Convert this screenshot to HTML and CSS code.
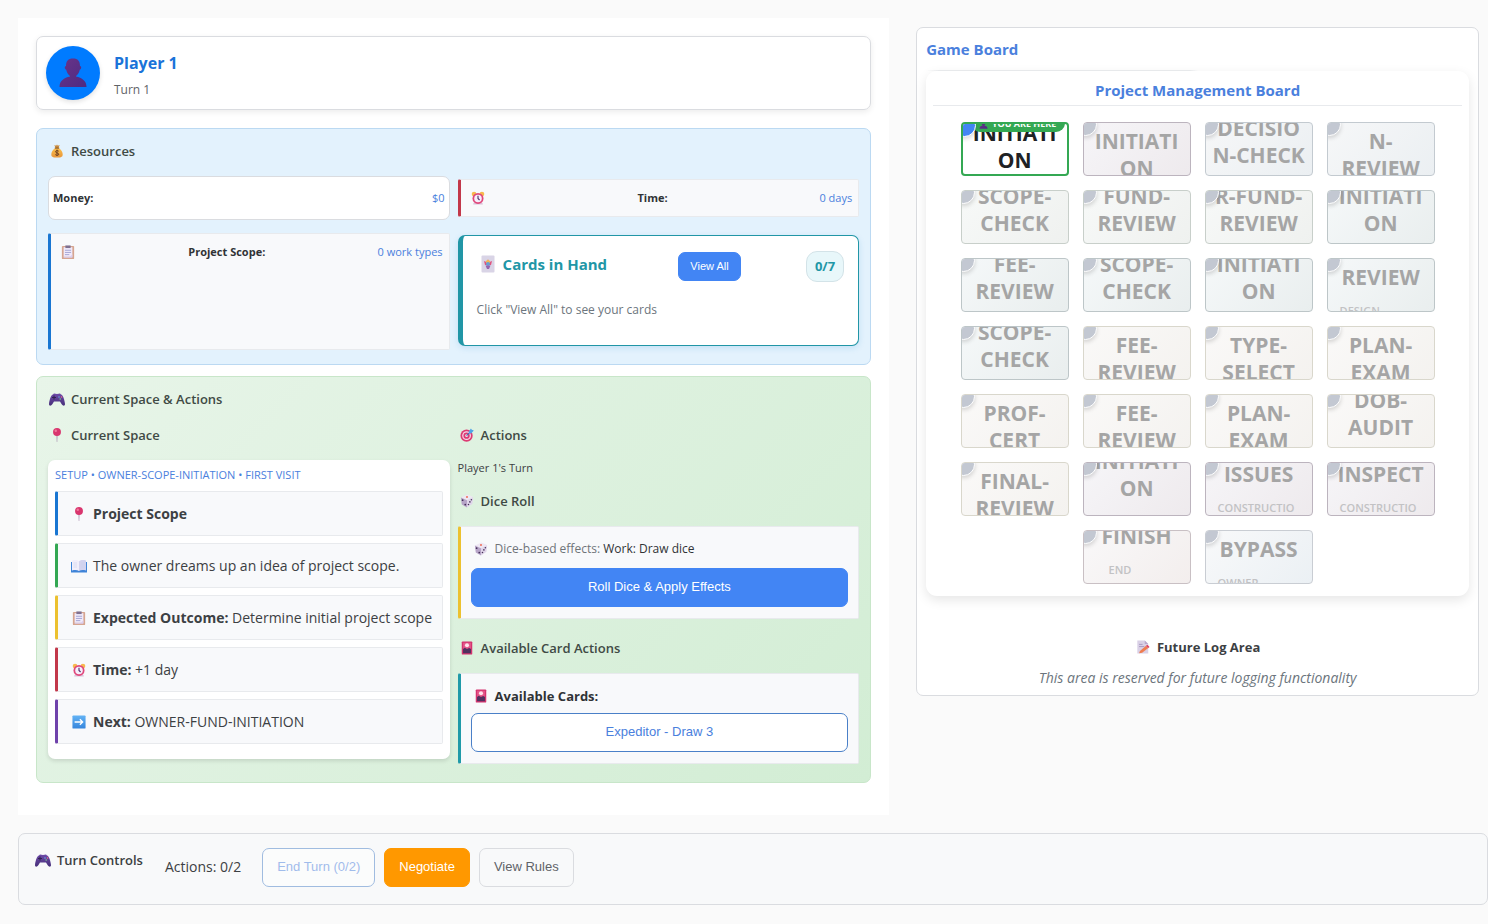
FILE: index.html
```html
<!DOCTYPE html>
<html lang="en">
<head>
<meta charset="utf-8">
<title>Project Management Game</title>
<link rel="stylesheet" href="styles.css">
</head>
<body>
<svg class="defs" aria-hidden="true">
  <defs>
    <linearGradient id="g-purple" x1="0" y1="0" x2="0" y2="1"><stop offset="0" stop-color="#6d4aa8"/><stop offset="1" stop-color="#47307a"/></linearGradient>
    <linearGradient id="g-person" x1="0" y1="0" x2="1" y2="1"><stop offset="0" stop-color="#6a3488"/><stop offset="1" stop-color="#4c2a83"/></linearGradient>
    <linearGradient id="g-gold" x1="0" y1="0" x2="0" y2="1"><stop offset="0" stop-color="#fcc04c"/><stop offset="1" stop-color="#e8963a"/></linearGradient>
    <linearGradient id="g-blue" x1="0" y1="0" x2="0" y2="1"><stop offset="0" stop-color="#63b3f5"/><stop offset="1" stop-color="#3585dc"/></linearGradient>
  </defs>
  <symbol id="i-person" viewBox="0 0 28 30"><path fill="url(#g-person)" d="M7 8c0-5 2-7.500 7-7.500s7 2.500 7 7.500l1 .5c.6 1-.2 3-1.200 3.300C20 15 18.500 17 17 18v.5c6 1.500 10.500 4 10.500 10.500H.5C.5 22.500 5 20 11 18.500V18c-1.500-1-3-3-3.800-6.200C6 11.500 5.400 9.500 6 8.500z"/></symbol>
  <symbol id="i-money" viewBox="0 0 16 16"><path fill="#c98b3c" d="M5 1l2 1 1-1.500L9 2l2-1-1.500 4h-3z"/><path fill="url(#g-gold)" d="M6 4.500h4c3 2 4.500 4.500 4.500 7.500 0 2.500-1.500 3.500-6.500 3.500S1.500 14.500 1.500 12c0-3 1.500-5.500 4.500-7.500z"/><path fill="#8a5a2b" d="M5.500 4h5v1.300h-5z"/><path d="M10 8.300C9 7 6.200 7.400 6.300 8.900c.1 1.700 3.600 1 3.700 2.700.1 1.700-3 1.900-4 .4M8 6.500v7" fill="none" stroke="#6b3f22" stroke-width="1.100"/></symbol>
  <symbol id="i-clock" viewBox="0 0 16 16"><circle cx="3.500" cy="3.500" r="2.700" fill="#f8b84e"/><circle cx="12.500" cy="3.500" r="2.700" fill="#f8b84e"/><path fill="#d9c3da" d="M3 13.500h10l.5 2h-11z"/><circle cx="8" cy="8.500" r="6.300" fill="#e0487c"/><circle cx="8" cy="8.500" r="4.300" fill="#f6eefb"/><path d="M8 5.500v3l1.800 1.800" fill="none" stroke="#51336f" stroke-width="1.300"/></symbol>
  <symbol id="i-clip" viewBox="0 0 16 16"><rect x="1" y="1" width="14" height="15" rx="1" fill="#d6a590"/><path fill="#f0eafa" d="M3 2.500h10v11H3z"/><path fill="#dccff0" d="M3 13.500h7l3-3v4H3z"/><path fill="#7f7090" d="M5 .5h6v3H5z"/><path stroke="#9b9ed0" d="M4.500 6h7M4.500 8.500h7M4.500 11h5"/></symbol>
  <symbol id="i-card" viewBox="0 0 14 18"><rect x=".5" y=".5" width="13" height="17" rx="1" fill="#d9d4e6"/><path fill="#e0557f" d="M3 6l2.500 1L7 4.500l1.500 2.500L11 6l-1 4H4z"/><path fill="#f3b556" d="M5 6l2-1.500L9 6v2H5z"/><circle cx="7" cy="9" r="2" fill="#64a0d8"/><path fill="#9764ae" d="M4.500 10.500h5L8 14H6z"/></symbol>
  <symbol id="i-pad" viewBox="0 0 16 14"><path fill="url(#g-purple)" d="M4 2.500C5 .8 6 2 8 2s3-1.200 4 .5c2 .5 3.500 5 4 9.500.1 2.300-2.200 2-3.300.2L11 9.500H5L3.300 12.200C2.200 14 0 14.300 0 12c.5-4.500 2-9 4-9.500z"/><path stroke="#312150" d="M3 5.500h4M5 3.500v4"/><circle cx="10" cy="5" r=".8" fill="#64a9e8"/><circle cx="12.500" cy="5" r=".8" fill="#f06c8c"/><circle cx="11.200" cy="7" r=".8" fill="#7cc98f"/></symbol>
  <symbol id="i-pin" viewBox="0 0 16 16"><path fill="#a993b0" d="M7.400 8h1.200l-.3 8h-.6z"/><circle cx="8" cy="4.600" r="4.500" fill="#d9366e"/><circle cx="6.600" cy="3.200" r="1.400" fill="#f0789b"/></symbol>
  <symbol id="i-book" viewBox="0 0 16 14"><path fill="#3f84d8" d="M0 3h16v10.500H0z"/><path fill="#f1eefb" d="M1 1.500c3-.8 5.500-.5 7 .8v9.700c-1.500-1-4-1.200-7-.5z"/><path fill="#d3d3ef" d="M15 1.500c-3-.8-5.500-.5-7 .8v9.700c1.500-1 4-1.200 7-.5z"/><path stroke="#c9d0ec" stroke-width=".6" d="M2.500 4H6M2.500 6H6M2.500 8H6M10 4h3.500M10 6h3.500M10 8h3.500"/></symbol>
  <symbol id="i-next" viewBox="0 0 16 16"><rect x=".5" y=".5" width="15" height="15" rx="1" fill="url(#g-blue)"/><path d="M3 8h9M9 4.800L12.200 8 9 11.200" fill="none" stroke="#fff" stroke-width="1.500"/></symbol>
  <symbol id="i-target" viewBox="0 0 16 16"><circle cx="7.500" cy="8.800" r="7" fill="#dc3b73"/><circle cx="7.500" cy="8.800" r="5" fill="#f6dce9"/><circle cx="7.500" cy="8.800" r="3.600" fill="#dc3b73"/><circle cx="7.500" cy="8.800" r="1.600" fill="#f6dce9"/><path stroke="#3b6fb5" stroke-width="1.200" d="M7.500 8.800l5-5"/><path fill="#4da3e8" d="M10 4L12.500.5l1 1.500 2.300.8-2.800 3.200-2.800.2z"/></symbol>
  <symbol id="i-die" viewBox="0 0 16 16"><path fill="#eee7f3" d="M1 4l7.500-3.500L15 3.500 8 7z"/><path fill="#b7a4c8" d="M1 4l7 3v8.500l-6-3.500z"/><path fill="#e0d5ea" d="M15 3.500L8 7v8.500l6.200-4.500z"/><circle cx="8" cy="3.500" r="1.200" fill="#ee735f"/><g fill="#443058"><circle cx="3" cy="7" r="1"/><circle cx="6" cy="12" r="1"/><circle cx="13" cy="6.500" r=".9"/><circle cx="11.300" cy="9" r=".9"/><circle cx="9.700" cy="12" r=".9"/></g></symbol>
  <symbol id="i-hana" viewBox="0 0 16 16"><rect x="2" y=".5" width="12" height="15" rx="1" fill="#d4336f"/><path fill="#e45589" d="M3.500 2h9v7h-9z"/><circle cx="8" cy="4.800" r="2.300" fill="#ffe3ec"/><path fill="#50305f" d="M3.500 9l2-1.200L8 9l2.500-1 2 1v5h-9z"/></symbol>
  <symbol id="i-memo" viewBox="0 0 16 16"><path fill="#d9d0e6" d="M1.500.5H10l4 4v11H1.500z"/><path fill="#b8a8cc" d="M10 .5l4 4h-4z"/><path stroke="#a594bd" d="M3.500 5h4M3.500 7.500h6"/><path fill="#ef7d51" d="M4.500 12.500l7-6 2.500 2.500-7 5.500-3.500.5z"/><path fill="#dd3c62" d="M11.500 6.500L13 5.300 15.500 8 14 9z"/></symbol>
</svg>

<div class="page">
  <main class="panel">
    <header class="player">
      <span class="avatar"><svg><use href="#i-person"/></svg></span>
      <div class="player-info">
        <h1 class="player-name">Player 1</h1>
        <p class="player-turn">Turn 1</p>
      </div>
    </header>

    <section class="section resources">
      <h2 class="heading"><svg class="icon"><use href="#i-money"/></svg>Resources</h2>
      <div class="columns resource-grid">
        <div class="stat stat-money"><strong>Money:</strong><span class="value">$0</span></div>
        <div class="stat accent red"><svg class="icon"><use href="#i-clock"/></svg><strong>Time:</strong><span class="value">0 days</span></div>
        <div class="stat stat-scope accent blue"><svg class="icon"><use href="#i-clip"/></svg><strong>Project Scope:</strong><span class="value">0 work types</span></div>
        <div class="hand">
          <div class="hand-head">
            <h3 class="hand-title"><svg class="icon"><use href="#i-card"/></svg>Cards in Hand</h3>
            <button class="btn btn-small" type="button">View All</button>
            <span class="badge">0/7</span>
          </div>
          <p class="hand-note">Click "View All" to see your cards</p>
        </div>
      </div>
    </section>

    <section class="section actions">
      <h2 class="heading"><svg class="icon"><use href="#i-pad"/></svg>Current Space &amp; Actions</h2>
      <div class="columns">
        <div>
          <h3 class="heading sub"><svg class="icon"><use href="#i-pin"/></svg>Current Space</h3>
          <div class="space">
            <p class="space-path">SETUP • OWNER-SCOPE-INITIATION • FIRST VISIT</p>
            <ul class="facts">
              <li class="accent blue"><svg class="icon"><use href="#i-pin"/></svg><strong>Project Scope</strong></li>
              <li class="accent green"><svg class="icon"><use href="#i-book"/></svg><span>The owner dreams up an idea of project scope.</span></li>
              <li class="accent yellow"><svg class="icon"><use href="#i-clip"/></svg><span><strong>Expected Outcome:</strong> Determine initial project scope</span></li>
              <li class="accent red"><svg class="icon"><use href="#i-clock"/></svg><span><strong>Time:</strong> +1 day</span></li>
              <li class="accent purple"><svg class="icon"><use href="#i-next"/></svg><span><strong>Next:</strong> OWNER-FUND-INITIATION</span></li>
            </ul>
          </div>
        </div>
        <div>
          <h3 class="heading sub"><svg class="icon"><use href="#i-target"/></svg>Actions</h3>
          <p class="whose-turn">Player 1's Turn</p>
          <h3 class="heading dice-heading"><svg class="icon"><use href="#i-die"/></svg>Dice Roll</h3>
          <div class="task accent yellow">
            <p class="task-text"><svg class="icon"><use href="#i-die"/></svg><span><span class="muted">Dice-based effects:</span> Work: Draw dice</span></p>
            <button class="btn btn-wide" type="button">Roll Dice &amp; Apply Effects</button>
          </div>
          <h3 class="heading card-heading"><svg class="icon"><use href="#i-hana"/></svg>Available Card Actions</h3>
          <div class="task accent teal">
            <p class="task-text task-title"><svg class="icon"><use href="#i-hana"/></svg><strong>Available Cards:</strong></p>
            <button class="btn btn-wide outline" type="button">Expeditor - Draw 3</button>
          </div>
        </div>
      </div>
    </section>
  </main>

  <aside class="side">
    <div class="board-panel">
      <h2 class="board-label">Game Board</h2>
      <div class="board">
        <h3 class="board-title">Project Management Board</h3>
        <div class="tiles">
          <div class="tile here"><span class="marker"><svg class="marker-icon"><use href="#i-person"/></svg>YOU ARE HERE</span><b>INITIATI<br>ON</b></div>
          <div class="tile plum low"><b>INITIATI<br>ON</b></div>
          <div class="tile steel high"><b>DECISIO<br>N-CHECK</b></div>
          <div class="tile steel low"><b>N-<br>REVIEW</b></div>

          <div class="tile sage high"><b>SCOPE-<br>CHECK</b></div>
          <div class="tile sage high"><b>FUND-<br>REVIEW</b></div>
          <div class="tile sage high"><b>R-FUND-<br>REVIEW</b></div>
          <div class="tile mint high"><b>INITIATI<br>ON</b></div>

          <div class="tile mint high"><b>FEE-<br>REVIEW</b></div>
          <div class="tile mint high"><b>SCOPE-<br>CHECK</b></div>
          <div class="tile mint high"><b>INITIATI<br>ON</b></div>
          <div class="tile mint low"><b>REVIEW</b><small>DESIGN</small></div>

          <div class="tile mint high"><b>SCOPE-<br>CHECK</b></div>
          <div class="tile sand low"><b>FEE-<br>REVIEW</b></div>
          <div class="tile sand low"><b>TYPE-<br>SELECT</b></div>
          <div class="tile sand low"><b>PLAN-<br>EXAM</b></div>

          <div class="tile sand low"><b>PROF-<br>CERT</b></div>
          <div class="tile sand low"><b>FEE-<br>REVIEW</b></div>
          <div class="tile sand low"><b>PLAN-<br>EXAM</b></div>
          <div class="tile sand high"><b>DOB-<br>AUDIT</b></div>

          <div class="tile sand low"><b>FINAL-<br>REVIEW</b></div>
          <div class="tile plum cut"><b>INITIATI<br>ON</b></div>
          <div class="tile plum"><b>ISSUES</b><small>CONSTRUCTIO</small></div>
          <div class="tile plum"><b>INSPECT</b><small>CONSTRUCTIO</small></div>

          <div class="tile rose high"><b>FINISH</b><small class="inset">END</small></div>
          <div class="tile sky low"><b>BYPASS</b><small>OWNER</small></div>
        </div>
      </div>
      <div class="log">
        <h3 class="log-title"><svg class="icon"><use href="#i-memo"/></svg>Future Log Area</h3>
        <p class="log-note">This area is reserved for future logging functionality</p>
      </div>
    </div>
  </aside>

  <footer class="controls">
    <h2 class="controls-title"><svg class="icon"><use href="#i-pad"/></svg>Turn Controls</h2>
    <span class="controls-count">Actions: 0/2</span>
    <div class="controls-buttons">
      <button class="btn outline" type="button" disabled>End Turn (0/2)</button>
      <button class="btn orange" type="button">Negotiate</button>
      <button class="btn plain" type="button">View Rules</button>
    </div>
  </footer>
</div>
</body>
</html>
```
FILE: styles.css
```css
* { box-sizing: border-box; }
body {
  margin: 0;
  background: #fafafa;
  color: #3c4043;
  font-family: "Open Sans", "Noto Sans", sans-serif;
  font-size: 13px;
  line-height: 20px;
}
h1, h2, h3, p, ul { margin: 0; padding: 0; }
ul { list-style: none; }
.defs { position: absolute; width: 0; height: 0; }
.icon { width: 16px; height: 14px; flex: none; }

.page {
  display: grid;
  grid-template-columns: 3fr 2fr;
  gap: 18px;
  padding: 18px 0 18px 18px;
}
.panel { background: #fff; padding: 18px 18px 32px; min-width: 0; }

.player {
  display: flex;
  align-items: center;
  gap: 14px;
  padding: 9px;
  border: 1px solid #dadce0;
  border-radius: 7px;
  box-shadow: 0 2px 6px rgba(0, 0, 0, .08);
}
.avatar {
  display: grid;
  place-items: center;
  width: 54px;
  height: 54px;
  border-radius: 50%;
  background: #007bff;
  box-shadow: 0 2px 5px rgba(0, 0, 0, .12);
}
.avatar svg { width: 28px; height: 30px; }
.player-info { padding-top: 4px; }
.player-name { font-size: 16px; line-height: 24px; font-weight: 700; color: #1a73d9; }
.player-turn { font-size: 12px; margin-top: 5px; font-weight: 500; color: #5f6368; }

.section { margin-top: 18px; padding: 11px; border: 1px solid #bbd9f2; border-radius: 7px; }
.resources { background: #e3f2fd; padding-bottom: 14px; }
.actions {
  margin-top: 11px;
  padding-bottom: 18px;
  border-color: #c8e6c9;
  background: linear-gradient(135deg, #e8f5e9, #d2edd4);
}
.heading {
  display: flex;
  align-items: center;
  gap: 6px;
  padding-left: 1px;
  font-size: 13px;
  line-height: 22px;
  font-weight: 600;
  color: #3f4a45;
}
.columns { display: grid; grid-template-columns: 1fr 1fr; gap: 12px 8px; }
.columns > div { min-width: 0; }
.resource-grid { margin-top: 14px; row-gap: 13px; align-items: center; }
.sub { margin-top: 14px; }

.accent { border: 1px solid #e8eaed; border-left-width: 3px; border-radius: 2px; background: #f8f9fb; }
.accent.blue { border-left-color: #1976d2; }
.accent.green { border-left-color: #34a853; }
.accent.yellow { border-left-color: #ecc12f; }
.accent.red { border-left-color: #c2384a; }
.accent.purple { border-left-color: #6f42ab; }
.accent.teal { border-left-color: #1f9aa8; }

.stat {
  display: flex;
  align-items: center;
  justify-content: space-between;
  padding: 8px 6px 8px 9px;
  font-size: 11px;
  color: #303336;
}
.stat-money {
  padding: 11px 4px;
  border: 1px solid #dadce0;
  border-radius: 7px;
  background: #fff;
}
.stat-scope { align-self: stretch; align-items: flex-start; }
.stat-scope .icon { margin-top: 3px; }
.value { color: #4a80dd; font-weight: 500; }

.hand {
  margin: 2px 0 4px;
  padding: 15px 14px 25px;
  border: 1px solid #2196a6;
  border-left-width: 5px;
  border-radius: 7px;
  background: #fff;
  box-shadow: 0 2px 6px rgba(23, 130, 200, .15);
}
.hand-head { display: flex; align-items: center; justify-content: space-between; }
.hand-title { display: flex; align-items: center; gap: 7px; padding: 0 6px 5px 3px; font-size: 15px; color: #2196a6; }
.hand-title .icon { height: 18px; }
.badge {
  padding: 4px 8px;
  border: 1px solid #d3e3e8;
  border-radius: 11px;
  background: #e8f7fa;
  color: #2196a6;
  font-size: 13px;
  line-height: 21px;
  font-weight: 700;
}
.hand-note { margin-top: 18px; font-size: 12px; color: #6c757d; }

.btn {
  padding: 11px 14px 13px;
  border: 1px solid #4285f4;
  border-radius: 7px;
  background: #4285f4;
  color: #fff;
  font-family: "Liberation Sans", Arial, sans-serif;
  font-size: 13px;
  line-height: 13px;
}
.btn-small { padding: 7px 11px; font-size: 11px; }
.btn-wide { display: block; width: 100%; }
.outline { background: #fff; color: #4a80dd; border-color: #4a80c8; }
.orange { background: #ff9800; border-color: #ff9800; }
.plain { background: #f8f9fa; border-color: #dadce0; color: #5f6368; }
.btn:disabled { opacity: .5; }

.space {
  margin-top: 14px;
  padding: 5px 7px 15px;
  border-radius: 7px;
  background: #fff;
  box-shadow: 0 2px 4px rgba(0, 0, 0, .12);
}
.space-path { font-size: 11px; color: #4a80dd; font-weight: 500; }
.facts { display: grid; gap: 7px; margin-top: 6px; font-size: 14px; }
.facts li { display: flex; align-items: center; gap: 6px; height: 45px; padding-left: 13px; }

.whose-turn { margin-top: 12px; font-size: 11px; }
.dice-heading { margin-top: 12px; }
.task { margin-top: 14px; padding: 12px 10px 11px; }
.task-text { display: flex; align-items: center; gap: 6px; margin-bottom: 9px; padding-left: 2px; font-size: 12px; color: #303336; }
.muted { color: #6f7479; font-weight: 500; }
.task-title { font-size: 13px; margin-bottom: 7px; }
.card-heading { margin-top: 18px; }

.side { padding: 9px 9px 0; min-width: 0; }
.board-panel { padding: 9px; border: 1px solid #dadce0; border-radius: 7px; background: #fff; }
.board-label { font-size: 15px; line-height: 25px; color: #4a80dd; }
.board-label::after {
  content: "";
  display: block;
  width: 50%;
  height: 1px;
  margin-top: 8px;
  background: linear-gradient(90deg, #fff, #eceef0 5%, #eceef0 97%, #fff);
}
.board {
  padding: 7px 7px 12px;
  border-radius: 11px;
  background: #fff;
  box-shadow: 0 4px 12px rgba(0, 0, 0, .1);
}
.board-title {
  padding-bottom: 3px;
  border-bottom: 1px solid #e8eaed;
  font-size: 15px;
  line-height: 24px;
  text-align: center;
  color: #4a80dd;
}
.tiles { display: flex; flex-wrap: wrap; justify-content: center; gap: 14px; padding: 16px 20px 0; }
.tile {
  position: relative;
  overflow: hidden;
  width: 108px;
  height: 54px;
  border: 1px solid #c9ccd1;
  border-radius: 4px;
  color: #a5a5a5;
  text-align: center;
}
.tile::before {
  content: "";
  position: absolute;
  z-index: 2;
  left: -10px;
  top: -10px;
  width: 21px;
  height: 21px;
  border: 1px solid #fff;
  border-radius: 50%;
  background: #c3c8d2;
  box-shadow: 0 2px 4px rgba(0, 0, 0, .15);
}
.tile b { display: block; margin-top: -2px; font-size: 21px; line-height: 27px; }
.tile small {
  display: block;
  margin-top: 12px;
  padding-left: 12px;
  font-size: 11px;
  line-height: 16px;
  font-weight: 600;
  text-align: left;
  color: #c2c2c4;
}
.tile small.inset { padding-left: 25px; }
.tile.high b { margin-top: -8px; }
.tile.low b { margin-top: 5px; }
.tile.cut b { margin-top: -15px; }
.plum { border-color: #bcb4be; background: linear-gradient(135deg, #f6f5f8, #eeeaed); }
.steel { border-color: #c3cad0; background: linear-gradient(135deg, #f6f7f8, #ebeff2); }
.sage { border-color: #c8cfca; background: linear-gradient(135deg, #f7f9f8, #eff1ef); }
.mint { border-color: #bdc6c8; background: linear-gradient(135deg, #f5f8f9, #e9eeee); }
.sand { border-color: #d9d7cc; background: linear-gradient(135deg, #faf9f8, #f4f2ef); }
.rose { border-color: #c9c0c4; background: linear-gradient(135deg, #f9f8f9, #f3eeed); }
.sky { border-color: #c9cdd3; background: linear-gradient(135deg, #f8f9fa, #ebf0f4); }
.here { border: 2px solid #34a853; background: #fff; color: #202124; }
.here b { margin-top: -4px; }
.here::before { background: #4285f4; }
.marker {
  position: absolute;
  top: -8px;
  left: 8px;
  right: 2px;
  display: flex;
  align-items: center;
  justify-content: center;
  gap: 4px;
  height: 16px;
  border-radius: 0 0 9px 9px;
  background: #34a853;
  color: #fff;
  font-size: 9px;
  line-height: 16px;
  font-weight: 700;
}
.marker-icon { width: 9px; height: 9px; }

.log { padding: 41px 0 0; text-align: center; }
.log-title { display: flex; align-items: center; justify-content: center; gap: 6px; font-size: 13px; }
.log-note { margin-top: 11px; margin-bottom: -2px; font-size: 14px; font-style: italic; color: #6c757d; }

.controls {
  grid-column: 1 / -1;
  display: flex;
  align-items: flex-start;
  padding: 14px 16px 17px;
  border: 1px solid #dadce0;
  border-radius: 7px;
  background: #f8f9fa;
}
.controls-title { display: flex; align-items: center; gap: 6px; margin-top: 2px; font-size: 13px; font-weight: 600; }
.controls-count { margin: 9px 21px 0 22px; font-size: 14px; }
.controls-buttons { display: flex; gap: 9px; }
```
